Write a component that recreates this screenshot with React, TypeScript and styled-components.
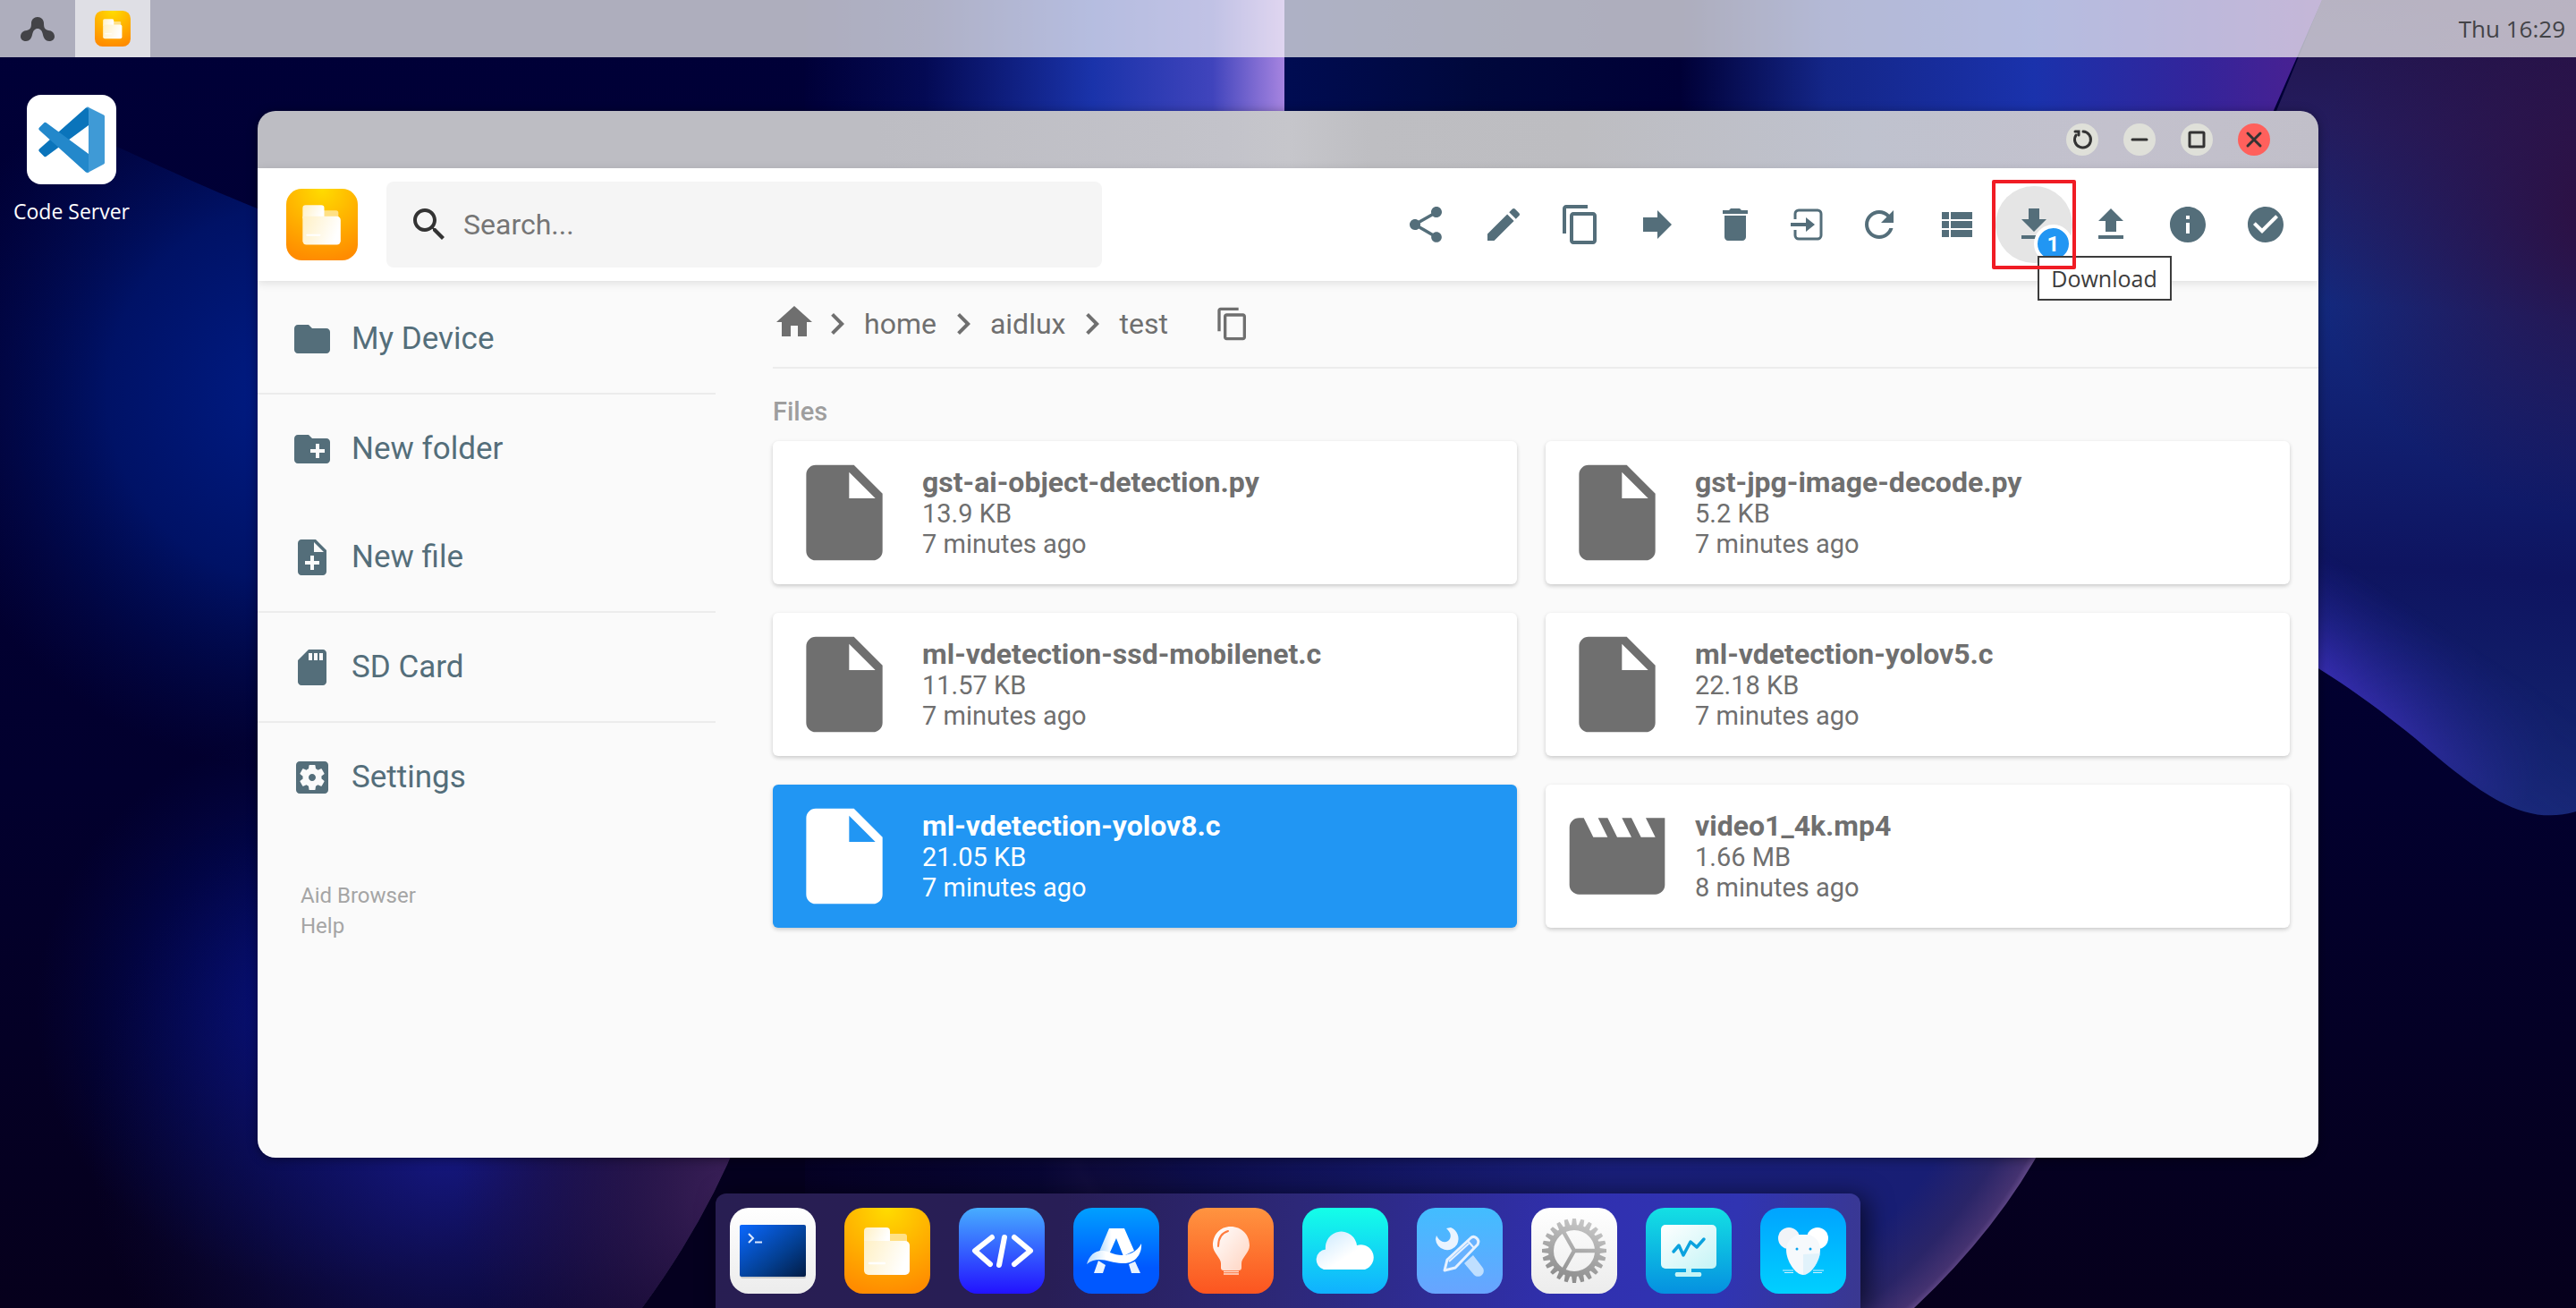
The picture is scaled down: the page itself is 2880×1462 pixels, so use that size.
import React from "react";
import styled, { createGlobalStyle, css } from "styled-components";

const slate = "#546e7a";
const grey = "#6f6f6f";
const blue = "#2196f3";
const uiFont = `"Open Sans", "Noto Sans", sans-serif`;

const GlobalStyle = createGlobalStyle`
  *, *::before, *::after { box-sizing: border-box; }
  body { margin: 0; background: #04002a; font-family: Roboto, "Liberation Sans", sans-serif; }
  button, input { font: inherit; color: inherit; }
  button { border: 0; padding: 0; background: none; cursor: pointer; }
  a { color: inherit; text-decoration: none; }
  ul, ol { list-style: none; margin: 0; padding: 0; }
  svg { display: block; flex: none; }
`;

/* ---------- material icons ---------- */

const paths = {
  share:
    "M18 16.08c-.76 0-1.44.3-1.96.77L8.91 12.7c.05-.23.09-.46.09-.7s-.04-.47-.09-.7l7.05-4.11c.54.5 1.25.81 2.04.81 1.66 0 3-1.34 3-3s-1.34-3-3-3-3 1.34-3 3c0 .24.04.47.09.7L8.04 9.81C7.5 9.31 6.79 9 6 9c-1.66 0-3 1.34-3 3s1.34 3 3 3c.79 0 1.5-.31 2.04-.81l7.12 4.16c-.05.21-.08.43-.08.65 0 1.61 1.31 2.92 2.92 2.92s2.92-1.31 2.92-2.92-1.31-2.92-2.92-2.92z",
  edit: "M3 17.25V21h3.75L17.81 9.94l-3.75-3.75L3 17.25zM20.71 7.04c.39-.39.39-1.02 0-1.41l-2.34-2.34c-.39-.39-1.02-.39-1.41 0l-1.83 1.83 3.75 3.75 1.83-1.83z",
  copy: "M16 1H4c-1.1 0-2 .9-2 2v14h2V3h12V1zm3 4H8c-1.1 0-2 .9-2 2v14c0 1.1.9 2 2 2h11c1.1 0 2-.9 2-2V7c0-1.1-.9-2-2-2zm0 16H8V7h11v14z",
  forward: "M12 8V4l8 8-8 8v-4H4V8z",
  remove: "M6 19c0 1.1.9 2 2 2h8c1.1 0 2-.9 2-2V7H6v12zM19 4h-3.5l-1-1h-5l-1 1H5v2h14V4z",
  refresh:
    "M17.65 6.35C16.2 4.9 14.21 4 12 4c-4.42 0-7.99 3.58-7.99 8s3.57 8 7.99 8c3.73 0 6.84-2.55 7.73-6h-2.08c-.82 2.33-3.04 4-5.65 4-3.31 0-6-2.69-6-6s2.69-6 6-6c1.66 0 3.14.69 4.22 1.78L13 11h7V4l-2.35 2.35z",
  list: "M4 14h4v-4H4v4zm0 5h4v-4H4v4zM4 9h4V5H4v4zm5 5h12v-4H9v4zm0 5h12v-4H9v4zM9 5v4h12V5H9z",
  download: "M19 9h-4V3H9v6H5l7 7 7-7zM5 18v2h14v-2H5z",
  upload: "M9 16h6v-6h4l-7-7-7 7h4zm-4 2h14v2H5z",
  info: "M12 2C6.48 2 2 6.48 2 12s4.48 10 10 10 10-4.48 10-10S17.52 2 12 2zm1 15h-2v-6h2v6zm0-8h-2V7h2v2z",
  check: "M12 2C6.48 2 2 6.48 2 12s4.48 10 10 10 10-4.48 10-10S17.52 2 12 2zm-2 15l-5-5 1.41-1.41L10 14.17l7.59-7.59L19 8l-9 9z",
  search:
    "M15.5 14h-.79l-.28-.27C15.41 12.59 16 11.11 16 9.5 16 5.91 13.09 3 9.5 3S3 5.91 3 9.5 5.91 16 9.5 16c1.61 0 3.09-.59 4.23-1.57l.27.28v.79l5 4.99L20.49 19l-4.99-5zm-6 0C7.01 14 5 11.99 5 9.5S7.01 5 9.5 5 14 7.01 14 9.5 11.99 14 9.5 14z",
  folder: "M10 4H4c-1.1 0-1.99.9-1.99 2L2 18c0 1.1.9 2 2 2h16c1.1 0 2-.9 2-2V8c0-1.1-.9-2-2-2h-8l-2-2z",
  newFolder:
    "M20 6h-8l-2-2H4c-1.11 0-1.99.89-1.99 2L2 18c0 1.11.89 2 2 2h16c1.11 0 2-.89 2-2V8c0-1.11-.89-2-2-2zm-1 8h-3v3h-2v-3h-3v-2h3V9h2v3h3v2z",
  newFile:
    "M14 2H6c-1.1 0-1.99.9-1.99 2L4 20c0 1.1.89 2 1.99 2H18c1.1 0 2-.9 2-2V8l-6-6zm2 14h-3v3h-2v-3H8v-2h3v-3h2v3h3v2zm-3-7V3.5L18.5 9H13z",
  sdCard:
    "M18 2h-8L4.02 8 4 20c0 1.1.9 2 2 2h12c1.1 0 2-.9 2-2V4c0-1.1-.9-2-2-2zm-6 6h-2V4h2v4zm3 0h-2V4h2v4zm3 0h-2V4h2v4z",
  settings:
    "M12 10c-1.1 0-2 .9-2 2s.9 2 2 2 2-.9 2-2-.9-2-2-2zm7-7H5c-1.11 0-2 .9-2 2v14c0 1.1.89 2 2 2h14c1.11 0 2-.9 2-2V5c0-1.1-.89-2-2-2zm-1.75 9c0 .23-.02.46-.05.68l1.48 1.16c.13.11.17.3.08.45l-1.4 2.42c-.09.15-.27.21-.43.15l-1.74-.7c-.36.28-.76.51-1.18.69l-.26 1.85c-.03.17-.18.3-.35.3h-2.8c-.17 0-.32-.13-.35-.29l-.26-1.85c-.43-.18-.82-.41-1.18-.69l-1.74.7c-.16.06-.34 0-.43-.15l-1.4-2.42c-.09-.15-.05-.34.08-.45l1.48-1.16c-.03-.23-.05-.46-.05-.69 0-.23.02-.46.05-.68l-1.48-1.16c-.13-.11-.17-.3-.08-.45l1.4-2.42c.09-.15.27-.21.43-.15l1.74.7c.36-.28.76-.51 1.18-.69l.26-1.85c.03-.17.18-.3.35-.3h2.8c.17 0 .32.13.35.29l.26 1.85c.43.18.82.41 1.18.69l1.74-.7c.16-.06.34 0 .43.15l1.4 2.42c.09.15.05.34-.08.45l-1.48 1.16c.03.23.05.46.05.69z",
  home: "M10 20v-6h4v6h5v-8h3L12 3 2 12h3v8z",
  chevron: "M10 6L8.59 7.41 13.17 12l-4.58 4.59L10 18l6-6z",
  file: "M6 2c-1.1 0-1.99.9-1.99 2L4 20c0 1.1.89 2 1.99 2H18c1.1 0 2-.9 2-2V8l-6-6H6zm7 7V3.5L18.5 9H13z",
  movie: "M18 4l2 4h-3l-2-4h-2l2 4h-3l-2-4H8l2 4H7L5 4H4c-1.1 0-1.99.9-1.99 2L2 18c0 1.1.9 2 2 2h16c1.1 0 2-.9 2-2V4h-4z",
};

type IconName = keyof typeof paths;

const Icon = ({ name, size = 48 }: { name: IconName; size?: number }) => (
  <svg width={size} height={size} viewBox="0 0 24 24" fill="currentColor" aria-hidden="true">
    <path d={paths[name]} />
  </svg>
);

const EnterIcon = () => (
  <svg width="40" height="40" viewBox="0 0 40 40" fill="none" aria-hidden="true">
    <path
      d="M7 14V8a4 4 0 0 1 4-4h21a4 4 0 0 1 4 4v24a4 4 0 0 1-4 4H11a4 4 0 0 1-4-4v-6"
      stroke="currentColor"
      strokeWidth="3"
    />
    <path d="M2 18h17v-6l10 8-10 8v-6H2z" fill="currentColor" />
  </svg>
);

/* ---------- app artwork ---------- */

const Art = styled.svg.attrs({ viewBox: "0 0 96 96", "aria-hidden": true })<{ $size: number }>`
  width: ${(p) => p.$size}px;
  height: ${(p) => p.$size}px;
`;

const FilesArt = ({ size = 96 }: { size?: number }) => (
  <Art $size={size}>
    <defs>
      <radialGradient id="filesBg" cx="50%" cy="0%" r="100%">
        <stop offset="0" stopColor="#ffdc00" />
        <stop offset="1" stopColor="#ff8c00" />
      </radialGradient>
      <linearGradient id="filesDoc" x1="0" x2="1" y1="0" y2="0.3">
        <stop offset="0" stopColor="#fff0c4" />
        <stop offset="1" stopColor="#ffffff" />
      </linearGradient>
    </defs>
    <rect width="96" height="96" rx="21" fill="url(#filesBg)" />
    <path d="M45 29h22a3 3 0 0 1 3 3v12H45z" fill="#ffe9a6" opacity=".8" />
    <path d="M22 26a4 4 0 0 1 4-4h21a4 4 0 0 1 4 4v14H22z" fill="url(#filesDoc)" />
    <path d="M22 37h46a5 5 0 0 1 5 5v28a5 5 0 0 1-5 5H27a5 5 0 0 1-5-5z" fill="url(#filesDoc)" />
    <path d="M28 62h17" stroke="#fff" strokeWidth="2.5" strokeLinecap="round" />
  </Art>
);

const TerminalArt = () => (
  <Art $size={96}>
    <defs>
      <linearGradient id="termBg" x2="0" y2="1">
        <stop offset="0" stopColor="#fff" />
        <stop offset="1" stopColor="#ececec" />
      </linearGradient>
      <linearGradient id="termScreen" x2="1" y2="1">
        <stop offset="0" stopColor="#0a68ff" />
        <stop offset=".6" stopColor="#033f92" />
        <stop offset="1" stopColor="#021c45" />
      </linearGradient>
    </defs>
    <rect width="96" height="96" rx="21" fill="url(#termBg)" />
    <rect x="12" y="21" width="73" height="58" rx="2" fill="#000" opacity=".15" />
    <rect x="11" y="19" width="74" height="58" rx="2" fill="url(#termScreen)" />
    <path d="M21 29l5 5-5 5M28 38.5h8" fill="none" stroke="#dbe8ff" strokeWidth="2" />
  </Art>
);

const CodeArt = () => (
  <Art $size={96}>
    <defs>
      <linearGradient id="codeBg" x2="0" y2="1">
        <stop offset="0" stopColor="#47adff" />
        <stop offset="1" stopColor="#2212ff" />
      </linearGradient>
    </defs>
    <rect width="96" height="96" rx="21" fill="url(#codeBg)" />
    <g fill="none" stroke="#fff" strokeWidth="6" strokeLinecap="round" strokeLinejoin="round">
      <path d="M37 33L18 48l17 15" />
      <path d="M51 33l-6 31" />
      <path d="M62 33l18 15-18 15" />
    </g>
  </Art>
);

const StoreArt = () => (
  <Art $size={96}>
    <defs>
      <linearGradient id="storeBg" x2="0" y2="1">
        <stop offset="0" stopColor="#00a0ff" />
        <stop offset=".7" stopColor="#0058ff" />
      </linearGradient>
      <linearGradient id="storeWave" x2="1" y2="0">
        <stop offset="0" stopColor="#b4dbff" />
        <stop offset=".35" stopColor="#fff" />
      </linearGradient>
    </defs>
    <rect width="96" height="96" rx="21" fill="url(#storeBg)" />
    <path d="M40 23h17l11 25-12 6-8-20-8 18-11-3z" fill="url(#storeWave)" />
    <path d="M28 59l8 5-3 9H23zM62 63l7-3 6 13H65z" fill="#e9f3ff" />
    <path d="M15 63C19 50 28 45 41 50c14 6 28 3 35-10 1 11-6 22-20 22-14 1-27-10-41 1z" fill="url(#storeWave)" />
  </Art>
);

const BulbArt = () => (
  <Art $size={96}>
    <defs>
      <linearGradient id="bulbBg" x2="0" y2="1">
        <stop offset="0" stopColor="#ff9440" />
        <stop offset="1" stopColor="#fc5520" />
      </linearGradient>
      <linearGradient id="bulbGlass" x2="1" y2="1">
        <stop offset="0" stopColor="#fff" />
        <stop offset="1" stopColor="#ffd3c0" />
      </linearGradient>
    </defs>
    <rect width="96" height="96" rx="21" fill="url(#bulbBg)" />
    <path
      d="M48 21c12 0 21 9 21 21 0 8-9 14-9 20v5a3 3 0 0 1-3 3H40a3 3 0 0 1-3-3v-5c0-6-9-12-9-20 0-12 8-21 20-21z"
      fill="url(#bulbGlass)"
    />
    <path d="M34 43c0-9 4-15 11-17" fill="none" stroke="#ff7a3c" strokeWidth="2" strokeLinecap="round" />
    <path d="M40 71.500h17M40 74h17" stroke="#ffe0d2" strokeWidth="1.500" />
  </Art>
);

const CloudArt = () => (
  <Art $size={96}>
    <defs>
      <linearGradient id="cloudBg" x2="0" y2="1">
        <stop offset="0" stopColor="#14ffe8" />
        <stop offset="1" stopColor="#10b0ff" />
      </linearGradient>
      <linearGradient id="cloudFill" x2="1" y2="1">
        <stop offset="0" stopColor="#c8e8ff" />
        <stop offset=".6" stopColor="#fff" />
      </linearGradient>
    </defs>
    <rect width="96" height="96" rx="21" fill="url(#cloudBg)" />
    <path d="M24 69a11.500 11.500 0 0 1 2-22.500A17.500 17.500 0 0 1 61 42a14 14 0 1 1 9 27z" fill="url(#cloudFill)" />
  </Art>
);

const ToolsArt = () => (
  <Art $size={96}>
    <defs>
      <linearGradient id="toolsBg" x2="0" y2="1">
        <stop offset="0" stopColor="#42bdff" />
        <stop offset="1" stopColor="#68a4ff" />
      </linearGradient>
    </defs>
    <rect width="96" height="96" rx="21" fill="url(#toolsBg)" />
    <path d="M21 35a13 13 0 0 0 24 6c4-8 0-16-7-19l-5 1c6 5 6 11 2 14-5 3-10 0-13-6z" fill="#eaf4ff" />
    <path d="M53 62l10-9 10 13a6 6 0 0 1-9 9z" fill="#bfdfff" />
    <path
      d="M31 70l3-12 26-24c4-4 11 1 8 7L43 67z"
      fill="#68b2ff"
      stroke="#e6f1ff"
      strokeWidth="3"
      strokeLinejoin="round"
    />
    <path d="M57 37l7 8M36 60l22-20" stroke="#e6f1ff" strokeWidth="2" />
  </Art>
);

const teeth = Array.from({ length: 24 }, (_, i) => i * 15);

const GearArt = () => (
  <Art $size={96}>
    <defs>
      <linearGradient id="gearBg" x2="0" y2="1">
        <stop offset="0" stopColor="#fff" />
        <stop offset="1" stopColor="#ececec" />
      </linearGradient>
      <linearGradient id="gearMetal" gradientUnits="userSpaceOnUse" x1="60" y1="12" x2="36" y2="84">
        <stop offset="0" stopColor="#c8c8c8" />
        <stop offset="1" stopColor="#8a8a8a" />
      </linearGradient>
      <mask id="gearMask">
        <g fill="#fff" stroke="#fff">
          {teeth.map((a) => (
            <path key={a} d="M46 12h4l1 8h-6z" transform={`rotate(${a} 48 48)`} stroke="none" />
          ))}
          <circle cx="48" cy="48" r="26" fill="none" strokeWidth="6" />
          <path d="M48 48h26M48 48L35 25M48 48L35 71" strokeWidth="4.500" />
        </g>
      </mask>
    </defs>
    <rect width="96" height="96" rx="21" fill="url(#gearBg)" />
    <rect width="96" height="96" fill="url(#gearMetal)" mask="url(#gearMask)" />
  </Art>
);

const MonitorArt = () => (
  <Art $size={96}>
    <defs>
      <linearGradient id="monBg" x2="0" y2="1">
        <stop offset="0" stopColor="#14e0e4" />
        <stop offset="1" stopColor="#0590e0" />
      </linearGradient>
      <linearGradient id="monScreen" x2="1" y2="1">
        <stop offset="0" stopColor="#fff" />
        <stop offset="1" stopColor="#c4f4f6" />
      </linearGradient>
    </defs>
    <rect width="96" height="96" rx="21" fill="url(#monBg)" />
    <rect x="17" y="19" width="62" height="49" rx="5" fill="url(#monScreen)" />
    <path d="M45 68h6v4h10a3 3 0 0 1 0 5H34a3 3 0 0 1 0-5h11z" fill="#c4f4f6" />
    <path
      d="M31 49l6-7 5 11 8-15 7 6 8-9"
      fill="none"
      stroke="#0aa2de"
      strokeWidth="3.500"
      strokeLinecap="round"
      strokeLinejoin="round"
    />
  </Art>
);

const MouseArt = () => (
  <Art $size={96}>
    <defs>
      <linearGradient id="mouseBg" x2="0" y2="1">
        <stop offset="0" stopColor="#00a4ff" />
        <stop offset="1" stopColor="#00d0ff" />
      </linearGradient>
    </defs>
    <rect width="96" height="96" rx="21" fill="url(#mouseBg)" />
    <circle cx="32" cy="34" r="12" fill="#f1f4f8" />
    <circle cx="64" cy="34" r="12" fill="#fff" />
    <path d="M42 30h13c7 3 12 8 12 17 0 12-10 28-19 28S29 59 29 47c0-9 6-14 13-17z" fill="#f6f9fc" />
    <path d="M48 52v23c9 0 17-14 19-24z" fill="#d8f0fb" opacity=".7" />
    <circle cx="41" cy="46" r="1.500" fill="#0aa5f0" />
    <circle cx="56" cy="46" r="1.500" fill="#0aa5f0" />
    <path d="M25 70h12M27 72.500h10M59 70h12M59 72.500h10" stroke="#d5f2ff" strokeWidth="1" />
  </Art>
);

const VsCodeArt = () => (
  <svg width="100" height="100" viewBox="0 0 100 100" aria-hidden="true">
    <path d="M66 14.500L69 14v20L21.500 69a2 2 0 0 1-2 0L14 63.500a2 2 0 0 1 0-3z" fill="#0a74bb" />
    <path d="M66 86.500l3 .5V66L21.500 31a2 2 0 0 0-2 0L14 36.500a2 2 0 0 0 0 3z" fill="#2388cb" />
    <path d="M66 14.500a3 3 0 0 1 4 0L86 22.500a2 2 0 0 1 1 2v51a2 2 0 0 1-1 2L70 86a3 3 0 0 1-4 .5c2 .5 3-1 3-3v-66c0-2-1-3.500-3-3z" fill="#3f9ad6" />
  </svg>
);

const LauncherArt = () => (
  <svg width="40" height="28" viewBox="0 0 40 28" aria-hidden="true">
    <path
      d="M20 1c4 0 7 3 7 7 0 5 1 7 5 8 4 0 7 3 7 7 0 3-3 5-6 5-4 0-6-3-7-7-1-5-3-7-6-7s-5 2-6 7c-1 4-3 7-7 7-3 0-6-2-6-5 0-4 3-7 7-7 4-1 5-3 5-8 0-4 3-7 7-7z"
      fill="#434347"
    />
  </svg>
);

/* ---------- wallpaper ---------- */

const Backdrop = styled.svg.attrs({
  viewBox: "0 0 2880 1462",
  preserveAspectRatio: "none",
  "aria-hidden": true,
})`
  position: absolute;
  inset: 0;
  width: 100%;
  height: 100%;
`;

const Wallpaper = () => (
  <Backdrop>
    <defs>
      <linearGradient id="wpBase" x2="0" y2="1">
        <stop offset="0" stopColor="#000038" />
        <stop offset=".6" stopColor="#02002e" />
        <stop offset="1" stopColor="#06001c" />
      </linearGradient>
      <radialGradient id="wpLeft" gradientUnits="userSpaceOnUse" cx="330" cy="440" r="420">
        <stop offset="0" stopColor="#001c86" />
        <stop offset=".5" stopColor="#001266" />
        <stop offset="1" stopColor="#000a50" stopOpacity="0" />
      </radialGradient>
      <linearGradient id="wpPetal" gradientUnits="userSpaceOnUse" x1="900" y1="0" x2="1436" y2="0">
        <stop offset="0" stopColor="#000038" />
        <stop offset=".25" stopColor="#040a54" />
        <stop offset=".6" stopColor="#1a33aa" />
        <stop offset=".85" stopColor="#4044bc" />
        <stop offset="1" stopColor="#a684e0" />
      </linearGradient>
      <linearGradient id="wpMid" gradientUnits="userSpaceOnUse" x1="1436" y1="0" x2="2600" y2="0">
        <stop offset="0" stopColor="#000c52" />
        <stop offset=".18" stopColor="#00083c" />
        <stop offset=".38" stopColor="#000036" />
        <stop offset=".52" stopColor="#142688" />
        <stop offset=".72" stopColor="#1a32ac" />
        <stop offset=".88" stopColor="#34249a" />
        <stop offset="1" stopColor="#4e2090" />
      </linearGradient>
      <linearGradient id="wpRight" gradientUnits="userSpaceOnUse" x1="2740" y1="0" x2="2690" y2="910">
        <stop offset="0" stopColor="#211248" />
        <stop offset=".16" stopColor="#241c5e" />
        <stop offset=".38" stopColor="#13297e" />
        <stop offset=".7" stopColor="#0e1460" />
        <stop offset="1" stopColor="#152872" />
      </linearGradient>
      <radialGradient id="wpRightRed" gradientUnits="userSpaceOnUse" cx="2920" cy="240" r="340">
        <stop offset="0" stopColor="#2e0f40" />
        <stop offset="1" stopColor="#2e0f40" stopOpacity="0" />
      </radialGradient>
      <linearGradient id="wpViolet" gradientUnits="userSpaceOnUse" x1="2650" y1="790" x2="2715" y2="690">
        <stop offset="0" stopColor="#3c2fb8" stopOpacity=".9" />
        <stop offset="1" stopColor="#2424a0" stopOpacity="0" />
      </linearGradient>
      <radialGradient id="wpVioletFade" gradientUnits="userSpaceOnUse" cx="2590" cy="740" r="280">
        <stop offset="0" stopColor="#fff" />
        <stop offset=".4" stopColor="#bbb" />
        <stop offset="1" stopColor="#222" />
      </radialGradient>
      <mask id="wpVioletMask">
        <rect x="2460" y="400" width="420" height="600" fill="url(#wpVioletFade)" />
      </mask>
      <radialGradient id="wpLeftGlow" gradientUnits="userSpaceOnUse" cx="350" cy="1130" r="310">
        <stop offset="0" stopColor="#001094" />
        <stop offset="1" stopColor="#000c60" stopOpacity="0" />
      </radialGradient>
      <radialGradient id="wpLowerGlow" gradientUnits="userSpaceOnUse" cx="500" cy="1270" r="400">
        <stop offset="0" stopColor="#161884" />
        <stop offset="1" stopColor="#10104a" stopOpacity="0" />
      </radialGradient>
      <radialGradient id="wpLowerRed" gradientUnits="userSpaceOnUse" cx="840" cy="1330" r="330">
        <stop offset="0" stopColor="#40245e" />
        <stop offset="1" stopColor="#2a1040" stopOpacity="0" />
      </radialGradient>
      <radialGradient id="wpMoon" gradientUnits="userSpaceOnUse" cx="1740" cy="1000" r="616">
        <stop offset="0" stopColor="#1a1e7c" />
        <stop offset=".84" stopColor="#181e74" />
        <stop offset=".93" stopColor="#2a2568" />
        <stop offset=".98" stopColor="#443270" />
        <stop offset="1" stopColor="#705494" />
      </radialGradient>
      <linearGradient id="wpMoonShade" gradientUnits="userSpaceOnUse" x1="820" y1="0" x2="1800" y2="0">
        <stop offset="0" stopColor="#05001f" />
        <stop offset=".35" stopColor="#080634" />
        <stop offset="1" stopColor="#0c0c4c" stopOpacity="0" />
      </linearGradient>
    </defs>
    <rect width="2880" height="1462" fill="url(#wpBase)" />
    <path d="M0 120C80 130 150 180 330 250V900H0z" fill="url(#wpLeft)" />
    <rect y="780" width="700" height="682" fill="url(#wpLeftGlow)" />
    <path d="M900 0h536v320H900z" fill="url(#wpPetal)" />
    <path d="M1436 0h1160l-140 320H1436z" fill="url(#wpMid)" />
    <path
      d="M2596 0H2880V907C2820 925 2770 885 2700 825 2660 793 2620 762 2560 728V320h-104L2545 124z"
      fill="url(#wpRight)"
    />
    <path d="M2596 0H2880V620H2456V320L2545 124z" fill="url(#wpRightRed)" />
    <path
      d="M2880 907C2820 925 2770 885 2700 825 2660 793 2620 762 2560 728V500h320z"
      fill="url(#wpViolet)"
      mask="url(#wpVioletMask)"
    />
    <path d="M0 800H850V1200Q815 1330 718 1462H0z" fill="url(#wpLowerGlow)" />
    <path d="M400 960H850V1200Q815 1330 718 1462H300z" fill="url(#wpLowerRed)" />
    <path d="M850 1200H2320Q2270 1340 2140 1462H718Q815 1330 850 1200z" fill="url(#wpMoon)" />
    <path d="M850 1200H1800V1462H718Q815 1330 850 1200z" fill="url(#wpMoonShade)" />
    <path d="M850 1200H900V1462H718Q815 1330 850 1200z" fill="#05001f" />
  </Backdrop>
);

/* ---------- desktop shell ---------- */

const Desktop = styled.div`
  position: relative;
  display: flex;
  flex-direction: column;
  height: 100vh;
  overflow: hidden;
`;

const TopBar = styled.header`
  position: relative;
  display: flex;
  align-items: stretch;
  height: 64px;
  padding-right: 12px;
  background: rgba(248, 248, 246, 0.7);
  font-family: ${uiFont};
`;

const TopButton = styled.button<{ $active?: boolean }>`
  display: grid;
  place-items: center;
  width: 84px;
  background: ${(p) => (p.$active ? "rgba(255, 255, 255, 0.6)" : "none")};
`;

const Clock = styled.time`
  margin-left: auto;
  font-size: 26px;
  line-height: 64px;
  color: #434347;
`;

const Workspace = styled.main`
  position: relative;
  flex: 1;
  padding-top: 42px;
`;

const Shortcut = styled.button`
  display: flex;
  flex-direction: column;
  align-items: center;
  gap: 14px;
  width: 160px;
  color: #fff;
  font-family: ${uiFont};
  font-size: 23px;
  line-height: 32px;
`;

const ShortcutTile = styled.span`
  border-radius: 16px;
  background: #fff;
`;

const Window = styled.section`
  position: absolute;
  inset: 60px 10% 168px;
  display: flex;
  flex-direction: column;
  border-radius: 20px;
  box-shadow: 0 2px 12px rgba(0, 0, 0, 0.4);
  overflow: hidden;
`;

const TitleBar = styled.div`
  display: flex;
  align-items: center;
  justify-content: flex-end;
  gap: 28px;
  height: 64px;
  padding-right: 54px;
  background: linear-gradient(90deg, #bdbdc3 0%, #bdbdc3 30%, #c3c3ca 47%, #c6c6cb 50%, #bebec2 54%, #bdbdc1 64%, #bfc2ce 78%, #c3c1cd 90%, #c1bfc9 100%);
`;

const WindowButton = styled.button<{ $close?: boolean }>`
  display: grid;
  place-items: center;
  width: 36px;
  height: 36px;
  border-radius: 50%;
  background: ${(p) => (p.$close ? "#ff605c" : "#dfe0d9")};
  color: #333;
`;

const windowIcons = [
  { label: "Reload", d: "M14 4a9 9 0 1 1-8 4M5 4h4v4" },
  { label: "Minimize", d: "M5 13h16" },
  { label: "Maximize", d: "M6 5h14a1 1 0 0 1 1 1v14a1 1 0 0 1-1 1H6a1 1 0 0 1-1-1V6a1 1 0 0 1 1-1z" },
  { label: "Close", d: "M6 6l14 14M20 6L6 20", close: true },
];

/* ---------- file browser ---------- */

const AppHeader = styled.div`
  position: relative;
  z-index: 1;
  display: flex;
  align-items: center;
  height: 126px;
  padding: 0 16px 0 32px;
  background: #fff;
  box-shadow: 0 2px 10px rgba(0, 0, 0, 0.12);
  color: ${slate};
`;

const SearchBox = styled.label`
  display: flex;
  align-items: center;
  gap: 14px;
  flex: 0 1 800px;
  height: 96px;
  margin-left: 32px;
  padding: 0 24px;
  border-radius: 8px;
  background: #f5f5f5;
  color: #333;
`;

const SearchInput = styled.input`
  flex: 1;
  min-width: 0;
  border: 0;
  padding: 0;
  outline: 0;
  background: none;
  font-size: 32px;
  line-height: 40px;
  &::placeholder {
    color: #757575;
    opacity: 1;
  }
`;

const Toolbar = styled.div`
  display: flex;
  align-items: center;
  flex: 0 0 1025px;
  margin-left: auto;
`;

const ToolSlot = styled.div<{ $narrow?: boolean }>`
  position: relative;
  flex: ${(p) => (p.$narrow ? "0 0 75px" : "1 1 86px")};
`;

const ToolButton = styled.button<{ $hovered?: boolean }>`
  display: grid;
  place-items: center;
  width: 100%;
  height: 86px;
  border-radius: 50%;
  background: ${(p) => (p.$hovered ? "#e5e5e5" : "none")};
`;

const Counter = styled.span`
  position: absolute;
  right: 0;
  bottom: 0;
  width: 43px;
  height: 43px;
  border: 4px solid #fff;
  border-radius: 50%;
  background: ${blue};
  color: #fff;
  font-size: 24px;
  font-weight: 700;
  line-height: 36px;
  text-align: center;
`;

const Tooltip = styled.span`
  position: absolute;
  left: 47px;
  top: 78px;
  width: 150px;
  border: 2px solid #3c3c3c;
  background: #fff;
  color: #3c3c3c;
  font-family: ${uiFont};
  font-size: 25px;
  line-height: 46px;
  text-align: center;
`;

const Marker = styled.span`
  position: absolute;
  inset: -7px -4px;
  border: 4px solid #f01c24;
  border-radius: 2px;
  pointer-events: none;
`;

const AppBody = styled.div`
  flex: 1;
  display: flex;
  min-height: 0;
  background: #fafafa;
`;

const Sidebar = styled.nav`
  flex: 0 0 512px;
  padding-top: 4px;
  color: ${slate};
`;

const NavGroup = styled.ul`
  & + & {
    border-top: 2px solid #ececec;
  }
`;

const NavButton = styled.button`
  display: flex;
  align-items: center;
  gap: 20px;
  width: 100%;
  height: 121px;
  padding-left: 37px;
  font-size: 35px;
`;

const Credits = styled.div`
  display: flex;
  flex-direction: column;
  align-items: flex-start;
  padding: 55px 0 0 48px;
  color: #a5a5a5;
  font-size: 24px;
  line-height: 34px;
`;

const Content = styled.div`
  flex: 1;
  min-width: 0;
  margin-left: 64px;
`;

const Breadcrumbs = styled.ol`
  display: flex;
  align-items: center;
  height: 98px;
  border-bottom: 2px solid #ececec;
  color: ${grey};
  font-size: 32px;
`;

const Crumb = styled.li`
  display: flex;
  align-items: center;
  gap: 6px;
  padding-right: 6px;
`;

const HomeCrumb = styled(Crumb)`
  padding: 0 0 4px;
`;

const CopyCrumb = styled.li`
  display: flex;
  margin-left: 46px;
`;

const GroupTitle = styled.h2`
  margin: 0;
  padding: 31px 0 15px;
  color: #9e9e9e;
  font-size: 29px;
  font-weight: 500;
  line-height: 35px;
`;

const FileGrid = styled.ul`
  display: grid;
  grid-template-columns: 1fr 1fr;
  gap: 32px;
  padding-right: 32px;
`;

const FileCard = styled.button<{ $selected?: boolean }>`
  display: flex;
  align-items: center;
  gap: 23px;
  width: 100%;
  padding: 16px;
  border-radius: 6px;
  background: #fff;
  color: ${grey};
  text-align: left;
  box-shadow: 0 2px 6px rgba(0, 0, 0, 0.06), 0 2px 4px rgba(0, 0, 0, 0.14);
  ${(p) =>
    p.$selected &&
    css`
      background: ${blue};
      color: #fff;
    `}
`;

const FileInfo = styled.span`
  display: grid;
  font-size: 29px;
  line-height: 34px;
`;

const FileName = styled.strong`
  font-size: 32px;
  font-weight: 700;
  line-height: 36px;
`;

const Dock = styled.nav`
  position: absolute;
  bottom: 0;
  left: 50%;
  transform: translateX(-50%);
  display: flex;
  gap: 32px;
  padding: 16px;
  border-radius: 12px 12px 0 0;
  background: linear-gradient(100deg, #281e52 0%, #281e56 30%, #2d2878 50%, #3030b0 75%, #3034b2 88%, #3a3890 100%);
  box-shadow: 8px 4px 28px rgba(0, 0, 0, 0.6);
`;

const tools: { label: string; icon: IconName | "enter" }[] = [
  { label: "Share", icon: "share" },
  { label: "Rename", icon: "edit" },
  { label: "Copy file", icon: "copy" },
  { label: "Move file", icon: "forward" },
  { label: "Delete", icon: "remove" },
  { label: "Open", icon: "enter" },
  { label: "Refresh", icon: "refresh" },
  { label: "Switch view", icon: "list" },
  { label: "Download", icon: "download" },
  { label: "Upload", icon: "upload" },
  { label: "Info", icon: "info" },
  { label: "Select multiple", icon: "check" },
];

const navGroups: { label: string; icon: IconName }[][] = [
  [{ label: "My Device", icon: "folder" }],
  [
    { label: "New folder", icon: "newFolder" },
    { label: "New file", icon: "newFile" },
  ],
  [{ label: "SD Card", icon: "sdCard" }],
  [{ label: "Settings", icon: "settings" }],
];

const files: { name: string; size: string; age: string; icon: IconName; selected?: boolean }[] = [
  { name: "gst-ai-object-detection.py", size: "13.9 KB", age: "7 minutes ago", icon: "file" },
  { name: "gst-jpg-image-decode.py", size: "5.2 KB", age: "7 minutes ago", icon: "file" },
  { name: "ml-vdetection-ssd-mobilenet.c", size: "11.57 KB", age: "7 minutes ago", icon: "file" },
  { name: "ml-vdetection-yolov5.c", size: "22.18 KB", age: "7 minutes ago", icon: "file" },
  { name: "ml-vdetection-yolov8.c", size: "21.05 KB", age: "7 minutes ago", icon: "file", selected: true },
  { name: "video1_4k.mp4", size: "1.66 MB", age: "8 minutes ago", icon: "movie" },
];

const dockApps = [
  { label: "Terminal", Artwork: TerminalArt },
  { label: "Files", Artwork: FilesArt },
  { label: "Code", Artwork: CodeArt },
  { label: "App store", Artwork: StoreArt },
  { label: "Tips", Artwork: BulbArt },
  { label: "Cloud", Artwork: CloudArt },
  { label: "Tools", Artwork: ToolsArt },
  { label: "Preferences", Artwork: GearArt },
  { label: "Monitor", Artwork: MonitorArt },
  { label: "Mouse", Artwork: MouseArt },
];

export default function App() {
  return (
    <Desktop>
      <GlobalStyle />
      <Wallpaper />
      <TopBar>
        <TopButton aria-label="Launcher">
          <LauncherArt />
        </TopButton>
        <TopButton aria-label="Files" $active>
          <FilesArt size={40} />
        </TopButton>
        <Clock>Thu 16:29</Clock>
      </TopBar>
      <Workspace>
        <Shortcut>
          <ShortcutTile>
            <VsCodeArt />
          </ShortcutTile>
          Code Server
        </Shortcut>
        <Window aria-label="Files">
          <TitleBar>
            {windowIcons.map(({ label, d, close }) => (
              <WindowButton key={label} aria-label={label} $close={close}>
                <svg width="26" height="26" viewBox="0 0 26 26" fill="none" stroke="currentColor" strokeWidth="3">
                  <path d={d} strokeLinecap="round" />
                </svg>
              </WindowButton>
            ))}
          </TitleBar>
          <AppHeader>
            <FilesArt size={80} />
            <SearchBox>
              <Icon name="search" />
              <SearchInput type="text" placeholder="Search..." aria-label="Search" />
            </SearchBox>
            <Toolbar>
              {tools.map(({ label, icon }) => (
                <ToolSlot key={label} $narrow={icon === "enter"}>
                  <ToolButton aria-label={label} $hovered={icon === "download"}>
                    {icon === "enter" ? <EnterIcon /> : <Icon name={icon} />}
                  </ToolButton>
                  {icon === "download" && (
                    <>
                      <Counter>1</Counter>
                      <Tooltip role="tooltip">Download</Tooltip>
                      <Marker />
                    </>
                  )}
                </ToolSlot>
              ))}
            </Toolbar>
          </AppHeader>
          <AppBody>
            <Sidebar>
              {navGroups.map((group, i) => (
                <NavGroup key={i}>
                  {group.map(({ label, icon }) => (
                    <li key={label}>
                      <NavButton>
                        <Icon name={icon} />
                        {label}
                      </NavButton>
                    </li>
                  ))}
                </NavGroup>
              ))}
              <Credits>
                <a href="#about">Aid Browser</a>
                <a href="#help">Help</a>
              </Credits>
            </Sidebar>
            <Content>
              <Breadcrumbs>
                <HomeCrumb>
                  <a href="#home" aria-label="Home">
                    <Icon name="home" />
                  </a>
                </HomeCrumb>
                {["home", "aidlux", "test"].map((part) => (
                  <Crumb key={part}>
                    <Icon name="chevron" />
                    <a href={`#${part}`}>{part}</a>
                  </Crumb>
                ))}
                <CopyCrumb>
                  <button aria-label="Copy path">
                    <Icon name="copy" size={40} />
                  </button>
                </CopyCrumb>
              </Breadcrumbs>
              <GroupTitle>Files</GroupTitle>
              <FileGrid>
                {files.map((file) => (
                  <li key={file.name}>
                    <FileCard $selected={file.selected} aria-pressed={!!file.selected}>
                      <Icon name={file.icon} size={128} />
                      <FileInfo>
                        <FileName>{file.name}</FileName>
                        <span>{file.size}</span>
                        <span>{file.age}</span>
                      </FileInfo>
                    </FileCard>
                  </li>
                ))}
              </FileGrid>
            </Content>
          </AppBody>
        </Window>
        <Dock aria-label="Dock">
          {dockApps.map(({ label, Artwork }) => (
            <button key={label} aria-label={label}>
              <Artwork />
            </button>
          ))}
        </Dock>
      </Workspace>
    </Desktop>
  );
}
